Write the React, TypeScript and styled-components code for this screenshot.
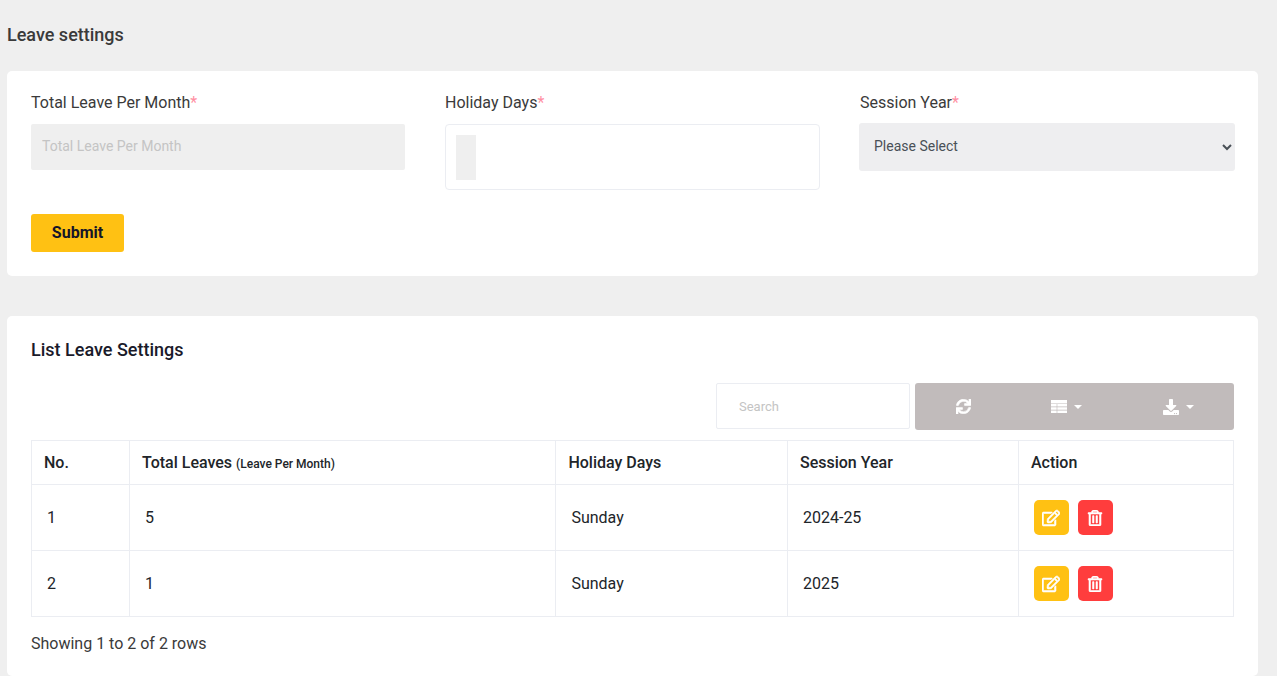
import React from "react";
import styled, { createGlobalStyle } from "styled-components";
import { FaSync, FaDownload, FaRegEdit, FaRegTrashAlt } from "react-icons/fa";

const Global = createGlobalStyle`
  html, body { margin: 0; padding: 0; height: 676px; overflow: hidden; background: #efefef; }
  * { box-sizing: border-box; }
  body { font-family: Roboto, "Liberation Sans", sans-serif; color: #212529; }
`;
const Page = styled.div`
  padding: 24px 19px 0 7px;
  display: flex;
  flex-direction: column;
  height: 676px;
  overflow: hidden;
`;
const Title = styled.h1`
  margin: 0 0 26px;
  font-size: 18px;
  line-height: 21px;
  font-weight: 500;
  color: #3a3a3a;
`;
const Card = styled.section`
  background: #fff;
  border-radius: 5px;
  padding: 20px 24px 24px;
`;
const FormCard = styled(Card)`
  height: 205px;
  margin-bottom: 40px;
`;
const FormGrid = styled.div`
  display: grid;
  grid-template-columns: 374px 375px 376px;
  column-gap: 40px;
`;
const Field = styled.div`
  display: flex;
  flex-direction: column;
`;
const Label = styled.label`
  font-size: 16px;
  line-height: 24px;
  margin-bottom: 9px;
  color: #3a3a3a;
  span { color: #ff8fa3; }
`;
const TextInput = styled.input`
  height: 46px;
  border: 0;
  border-radius: 2px;
  background: #efefef;
  padding: 0 11px 2px;
  font: 14px Roboto, sans-serif;
  &::placeholder { color: #c4c4c4; opacity: 1; }
`;
const TagBox = styled.div`
  height: 66px;
  border: 1px solid #ebedf2;
  border-radius: 4px;
  padding: 10px;
`;
const TagStub = styled.div`
  width: 20px;
  height: 45px;
  background: #efefef;
`;
const Select = styled.select`
  height: 48px;
  margin: -1px 1px 0 -1px;
  border: 0;
  border-radius: 3px;
  background-color: #eeeef0;
  padding: 0 11px 2px;
  font: 14px Roboto, sans-serif;
  color: #495057;
`;
const Submit = styled.button`
  margin-top: 24px;
  display: block;
  width: 93px;
  height: 38px;
  border: 0;
  border-radius: 3px;
  padding: 0 0 2px;
  background: #ffc113;
  font: 700 16px Roboto, sans-serif;
  color: #151528;
`;
const ListCard = styled(Card)`
  flex: 1;
  padding: 23px 24px 0;
`;
const ListTitle = styled.h2`
  margin: 0 0 23px;
  font-size: 18px;
  line-height: 21px;
  font-weight: 500;
  color: #1a1a2a;
`;
const Toolbar = styled.div`
  display: flex;
  justify-content: flex-end;
  gap: 5px;
  margin-bottom: 10px;
`;
const Search = styled.input`
  width: 194px;
  height: 46px;
  border: 1px solid #ebedf2;
  border-radius: 2px;
  padding: 0 22px;
  font: 13px Roboto, sans-serif;
  &::placeholder { color: #c4c4c4; opacity: 1; }
`;
const ButtonGroup = styled.div`
  width: 319px;
  height: 47px;
  display: grid;
  grid-template-columns: 96px 111px 112px;
  background: #c1bbbb;
  border-radius: 3px;
`;
const ToolButton = styled.div`
  display: flex;
  align-items: center;
  justify-content: center;
  gap: 7px;
  color: #fff;
  font-size: 16px;
`;
const Caret = styled.i`
  width: 0;
  height: 0;
  border-left: 4px solid transparent;
  border-right: 4px solid transparent;
  border-top: 4px solid #fff;
`;
const Table = styled.table`
  width: 100%;
  border-collapse: collapse;
  table-layout: fixed;
  color: #212529;
`;
const Th = styled.th`
  height: 44px;
  padding: 0 12px;
  border: 1px solid #ebedf2;
  text-align: left;
  font-size: 16px;
  font-weight: 500;
  small { font-size: 12px; }
`;
const Td = styled.td`
  height: 66px;
  padding: 0 15px;
  border: 1px solid #ebedf2;
  font-size: 16px;
`;
const Actions = styled.div`
  display: flex;
  gap: 9px;
`;
const IconButton = styled.div<{ $bg: string }>`
  width: 35px;
  height: 35px;
  border-radius: 5px;
  background: ${(p) => p.$bg};
  color: #fff;
  display: flex;
  align-items: center;
  justify-content: center;
  svg { stroke: currentColor; stroke-width: 18px; }
`;
const TrashIcon = styled(FaRegTrashAlt)`
  margin-left: -1px;
`;
const Footer = styled.div`
  margin-top: 17px;
  font-size: 16px;
  line-height: 20px;
  color: #3a3a3a;
`;

const TableIcon = () => (
  <svg width="16" height="13" viewBox="0 0 16 13" fill="#fff">
    <path d="M0 0h16v3.4H0zM0 4h5.7v2.6H0zM6.3 4H16v2.6H6.3zM0 7.2h5.7v2.6H0zM6.3 7.2H16v2.6H6.3zM0 10.4h5.7V13H0zM6.3 10.4H16V13H6.3z" />
  </svg>
);

const rows = [
  { no: 1, leaves: 5, day: "Sunday", year: "2024-25" },
  { no: 2, leaves: 1, day: "Sunday", year: "2025" },
];

export default function App() {
  return (
    <Page>
      <Global />
      <Title>Leave settings</Title>
      <FormCard>
        <FormGrid>
          <Field>
            <Label>Total Leave Per Month<span>*</span></Label>
            <TextInput placeholder="Total Leave Per Month" readOnly />
          </Field>
          <Field>
            <Label>Holiday Days<span>*</span></Label>
            <TagBox><TagStub /></TagBox>
          </Field>
          <Field>
            <Label>Session Year<span>*</span></Label>
            <Select><option>Please Select</option></Select>
          </Field>
        </FormGrid>
        <Submit>Submit</Submit>
      </FormCard>
      <ListCard>
        <ListTitle>List Leave Settings</ListTitle>
        <Toolbar>
          <Search placeholder="Search" readOnly />
          <ButtonGroup>
            <ToolButton><FaSync size={15} stroke="#fff" strokeWidth={20} /></ToolButton>
            <ToolButton><TableIcon /><Caret /></ToolButton>
            <ToolButton><FaDownload size={16} /><Caret /></ToolButton>
          </ButtonGroup>
        </Toolbar>
        <Table>
          <colgroup>
            <col style={{ width: 98 }} />
            <col style={{ width: 426.4 }} />
            <col style={{ width: 231.6 }} />
            <col style={{ width: 231 }} />
            <col />
          </colgroup>
          <thead>
            <tr>
              <Th>No.</Th>
              <Th>Total Leaves <small>(Leave Per Month)</small></Th>
              <Th>Holiday Days</Th>
              <Th>Session Year</Th>
              <Th>Action</Th>
            </tr>
          </thead>
          <tbody>
            {rows.map((r) => (
              <tr key={r.no}>
                <Td>{r.no}</Td>
                <Td>{r.leaves}</Td>
                <Td>{r.day}</Td>
                <Td>{r.year}</Td>
                <Td>
                  <Actions>
                    <IconButton $bg="#ffc113"><FaRegEdit size={18} /></IconButton>
                    <IconButton $bg="#ff3d3d"><TrashIcon size={16} /></IconButton>
                  </Actions>
                </Td>
              </tr>
            ))}
          </tbody>
        </Table>
        <Footer>Showing 1 to 2 of 2 rows</Footer>
      </ListCard>
    </Page>
  );
}
